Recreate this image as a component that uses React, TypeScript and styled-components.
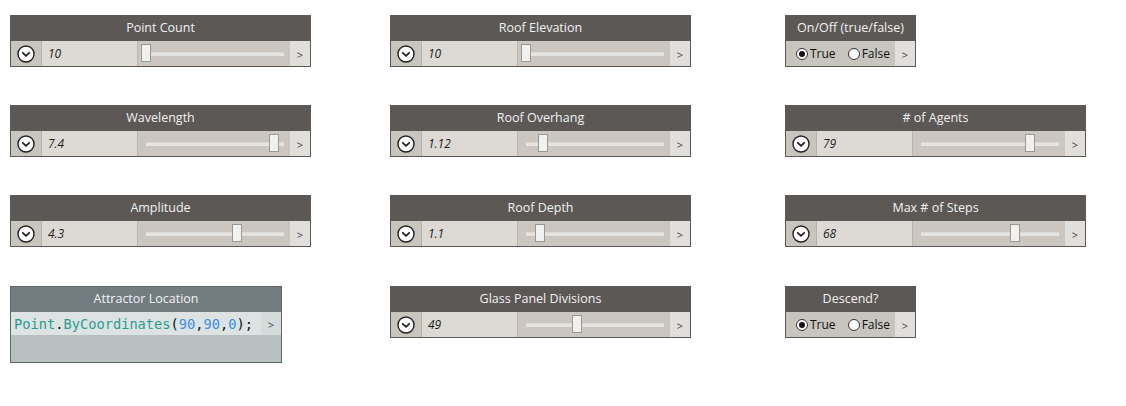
import React from "react";
import styled, { createGlobalStyle } from "styled-components";

const GlobalStyle = createGlobalStyle`
  body {
    margin: 0;
    background: #ffffff;
    font-family: "Open Sans", "Noto Sans", sans-serif;
  }
`;

type SliderData = { title: string; value: string; pos: number };
type Item =
  | { kind: "slider"; data: SliderData }
  | { kind: "bool"; title: string }
  | { kind: "code"; title: string };

const column1: Item[] = [
  { kind: "slider", data: { title: "Point Count", value: "10", pos: 0 } },
  { kind: "slider", data: { title: "Wavelength", value: "7.4", pos: 0.93 } },
  { kind: "slider", data: { title: "Amplitude", value: "4.3", pos: 0.66 } },
  { kind: "code", title: "Attractor Location" },
];
const column2: Item[] = [
  { kind: "slider", data: { title: "Roof Elevation", value: "10", pos: 0 } },
  { kind: "slider", data: { title: "Roof Overhang", value: "1.12", pos: 0.12 } },
  { kind: "slider", data: { title: "Roof Depth", value: "1.1", pos: 0.1 } },
  { kind: "slider", data: { title: "Glass Panel Divisions", value: "49", pos: 0.37 } },
];
const column3: Item[] = [
  { kind: "bool", title: "On/Off (true/false)" },
  { kind: "slider", data: { title: "# of Agents", value: "79", pos: 0.79 } },
  { kind: "slider", data: { title: "Max # of Steps", value: "68", pos: 0.68 } },
  { kind: "bool", title: "Descend?" },
];

const Canvas = styled.div`
  display: grid;
  grid-template-columns: 380px 395px 300px;
  padding: 15px 0 0 10px;
`;

const Column = styled.div`
  display: grid;
  grid-auto-rows: 90px;
  align-items: start;
  & > div:last-child {
    margin-top: 1px;
  }
`;

const Node = styled.div<{ $width: number; $border?: string }>`
  width: ${(p) => p.$width}px;
  border: 1px solid ${(p) => p.$border || "#5b5855"};
  box-sizing: border-box;
  background: #5b5855;
`;

const Header = styled.div<{ $bg?: string }>`
  height: 25px;
  background: ${(p) => p.$bg || "#5b5855"};
  color: #f2f2f2;
  font-size: 12.5px;
  display: flex;
  align-items: center;
  justify-content: center;
  padding-bottom: 3px;
  box-sizing: border-box;
`;

const Body = styled.div`
  display: flex;
  height: 25px;
`;

const DropCell = styled.div`
  width: 30px;
  background: #c8c5bf;
  display: flex;
  align-items: center;
  justify-content: center;
  border-right: 1px solid #b5b2ac;
`;

const ValueCell = styled.div`
  width: 96px;
  background: #dddad5;
  font-style: italic;
  font-size: 12px;
  color: #1e1e1e;
  display: flex;
  align-items: center;
  padding-left: 6px;
  box-sizing: border-box;
  border-right: 1px solid #b9b6b0;
`;

const SliderCell = styled.div`
  flex: 1;
  background: #cbc7c0;
  display: flex;
  align-items: center;
  padding: 0 6px 0 8px;
`;

const Track = styled.div`
  position: relative;
  flex: 1;
  height: 3px;
  background: #e6e4e0;
  border-top: 1px solid #dcdad6;
`;

const Thumb = styled.div`
  position: absolute;
  top: -9px;
  width: 10px;
  height: 18px;
  background: #f1f1f0;
  border: 1px solid #9a9893;
  box-sizing: border-box;
`;

const Arrow = styled.div<{ $bg?: string }>`
  width: 20px;
  background: ${(p) => p.$bg || "#e1dfdb"};
  color: #444;
  font-size: 11px;
  display: flex;
  align-items: center;
  justify-content: center;
  padding-top: 2px;
  box-sizing: border-box;
`;

const BoolBody = styled.div`
  display: flex;
  height: 25px;
  background: #c8c5bf;
`;

const Options = styled.div`
  flex: 1;
  display: flex;
  align-items: center;
  gap: 12px;
  padding-left: 10px;
  font-size: 12px;
  color: #111;
`;

const Option = styled.label`
  display: flex;
  align-items: center;
  gap: 2px;
`;

const Radio = styled.span<{ $on: boolean }>`
  width: 12px;
  height: 12px;
  border-radius: 50%;
  border: 1px solid #333;
  background: #fff;
  box-sizing: border-box;
  display: flex;
  align-items: center;
  justify-content: center;
  &::after {
    content: "";
    width: 6px;
    height: 6px;
    border-radius: 50%;
    background: ${(p) => (p.$on ? "#111" : "transparent")};
  }
`;

const CodeBody = styled.div`
  background: #b8bfc0;
  height: 50px;
`;

const CodeLine = styled.div`
  display: flex;
  height: 23px;
`;

const Code = styled.div`
  flex: 1;
  background: #dde3e3;
  font-family: "DejaVu Sans Mono", "Liberation Mono", monospace;
  font-size: 13.7px;
  color: #111;
  display: flex;
  align-items: center;
  padding-left: 3px;
  white-space: nowrap;
  overflow: hidden;
`;

const Tok = styled.span<{ $c: string }>`
  color: ${(p) => p.$c};
`;

const DropIcon = () => (
  <svg width="18" height="18" viewBox="0 0 18 18">
    <circle cx="9" cy="9" r="8" fill="#fff" stroke="#222" strokeWidth="1.4" />
    <path d="M5.8 7.8 L9 10.8 L12.2 7.8" fill="none" stroke="#222" strokeWidth="1.8" strokeLinecap="round" strokeLinejoin="round" />
  </svg>
);

const Slider = ({ data }: { data: SliderData }) => (
  <Node $width={301}>
    <Header>{data.title}</Header>
    <Body>
      <DropCell>
        <DropIcon />
      </DropCell>
      <ValueCell>{data.value}</ValueCell>
      <SliderCell>
        <Track>
          <Thumb style={{ left: `calc(${data.pos * 100}% - 5px)` }} />
        </Track>
      </SliderCell>
      <Arrow>&gt;</Arrow>
    </Body>
  </Node>
);

const BoolNode = ({ title }: { title: string }) => (
  <Node $width={131}>
    <Header>{title}</Header>
    <BoolBody>
      <Options>
        <Option>
          <Radio $on /> True
        </Option>
        <Option>
          <Radio $on={false} /> False
        </Option>
      </Options>
      <Arrow>&gt;</Arrow>
    </BoolBody>
  </Node>
);

const CodeNode = ({ title }: { title: string }) => (
  <Node $width={272} $border="#5f6466">
    <Header $bg="#737c80">{title}</Header>
    <CodeBody>
      <CodeLine>
        <Code>
          <Tok $c="#2a9d8f">Point</Tok>.<Tok $c="#2a9d8f">ByCoordinates</Tok>(
          <Tok $c="#3a8ee6">90</Tok>,<Tok $c="#3a8ee6">90</Tok>,<Tok $c="#3a8ee6">0</Tok>);
        </Code>
        <Arrow $bg="#d5dbdb">&gt;</Arrow>
      </CodeLine>
    </CodeBody>
  </Node>
);

const renderItem = (item: Item, i: number) => {
  if (item.kind === "slider") return <div key={i}><Slider data={item.data} /></div>;
  if (item.kind === "bool") return <div key={i}><BoolNode title={item.title} /></div>;
  return <div key={i}><CodeNode title={item.title} /></div>;
};

export default function App() {
  return (
    <>
      <GlobalStyle />
      <Canvas>
        <Column>{column1.map(renderItem)}</Column>
        <Column>{column2.map(renderItem)}</Column>
        <Column>{column3.map(renderItem)}</Column>
      </Canvas>
    </>
  );
}
